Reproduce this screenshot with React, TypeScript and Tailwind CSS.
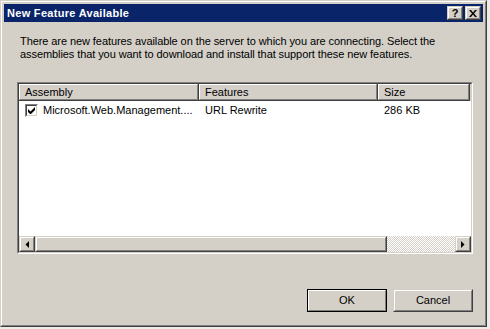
import React from "react";

const rOuter =
  "border border-t-[#d4d0c8] border-l-[#d4d0c8] border-r-[#404040] border-b-[#404040]";
const rInner =
  "border border-t-white border-l-white border-r-[#808080] border-b-[#808080]";

function Raised({ className = "", children }: { className?: string; children?: React.ReactNode }) {
  return (
    <div className={`${rOuter} ${className}`}>
      <div className={`${rInner} w-full h-full bg-[#d4d0c8] flex items-center justify-center`}>{children}</div>
    </div>
  );
}

function LeftArrow() {
  return (
    <svg width="4" height="7" viewBox="0 0 4 7">
      <polygon points="4,0 4,7 0.5,3.5" fill="#000" />
    </svg>
  );
}
function RightArrow() {
  return (
    <svg width="4" height="7" viewBox="0 0 4 7">
      <polygon points="0,0 0,7 3.5,3.5" fill="#000" />
    </svg>
  );
}

function HeaderCell({ w, label }: { w: string; label?: string }) {
  return (
    <div className={`${w} h-full border-r border-b border-r-[#404040] border-b-[#404040]`}>
      <div className="h-full border border-t-white border-l-white border-r-[#808080] border-b-[#808080] bg-[#d4d0c8] pl-[5px] flex items-center leading-none">
        {label}
      </div>
    </div>
  );
}

export default function App() {
  return (
    <div className="w-[490px] h-[329px] bg-[#ecebe8] font-['Liberation_Sans',Arial,sans-serif] text-[11px] text-black">
      <div className={`w-[487px] h-[327px] ${rOuter}`}>
        <div className={`w-full h-full ${rInner} bg-[#d4d0c8] p-[2px] flex flex-col`}>
          {/* title bar */}
          <div className="h-[18px] bg-[#0a246a] flex items-center pl-[3px] pr-[2px]">
            <span className="font-bold text-white leading-none tracking-[0.3px]">New Feature Available</span>
            <div className="ml-auto flex">
              <Raised className="w-[16px] h-[14px]">
                <span className="font-bold text-[11px] leading-none">?</span>
              </Raised>
              <Raised className="w-[16px] h-[14px] ml-[2px]">
                <svg width="8" height="7" viewBox="0 0 8 7">
                  <path d="M0 0h2l2 2.5L6 0h2L5 3.5 8 7H6L4 4.5 2 7H0l3-3.5z" fill="#000" />
                </svg>
              </Raised>
            </div>
          </div>

          {/* body */}
          <div className="flex flex-col pl-[13px] pr-[10px]">
            <p className="mt-[13px] pl-[3px] leading-[13px] tracking-[-0.08px]">
              There are new features available on the server to which you are connecting. Select the
              <br />
              assemblies that you want to download and install that support these new features.
            </p>

            {/* list box */}
            <div className="mt-[21px] h-[172px] w-[456px] border border-t-[#808080] border-l-[#808080] border-r-white border-b-white">
              <div className="w-full h-full border border-t-[#404040] border-l-[#404040] border-r-[#d4d0c8] border-b-[#d4d0c8] bg-white flex flex-col">
                <div className="flex h-[17px] shrink-0">
                  <HeaderCell w="w-[180px]" label="Assembly" />
                  <HeaderCell w="w-[179px]" label="Features" />
                  <HeaderCell w="w-[92px]" label="Size" />
                  <div className="flex-1 bg-[#d4d0c8]" />
                </div>
                <div className="flex h-[16px] mt-[1px] items-center">
                  <div className="w-[180px] pl-[6px] flex items-center">
                    <div className="w-[13px] h-[13px] border border-t-[#808080] border-l-[#808080] border-r-white border-b-white">
                      <div className="w-full h-full border border-t-[#404040] border-l-[#404040] border-r-[#d4d0c8] border-b-[#d4d0c8] bg-white flex items-center justify-center">
                        <svg width="7" height="7" viewBox="0 0 7 7">
                          <path d="M0 2v3l2 2h1l4-4V0L2.5 4.5z" fill="#000" />
                        </svg>
                      </div>
                    </div>
                    <span className="ml-[5px] leading-none whitespace-nowrap">Microsoft.Web.Management....</span>
                  </div>
                  <div className="w-[179px] pl-[6px] leading-none">URL Rewrite</div>
                  <div className="w-[92px] pl-[6px] leading-none">286 KB</div>
                </div>
                <div className="flex-1" />
                {/* horizontal scrollbar */}
                <div className="flex h-[16px] shrink-0">
                  <Raised className="w-[16px] h-[16px]">
                    <LeftArrow />
                  </Raised>
                  <Raised className="w-[352px] h-[16px]" />
                  <div className="flex-1 bg-[repeating-conic-gradient(#ffffff_0_25%,#d4d0c8_0_50%)] bg-[length:2px_2px]" />
                  <Raised className="w-[16px] h-[16px]">
                    <RightArrow />
                  </Raised>
                </div>
              </div>
            </div>

            {/* buttons */}
            <div className="mt-[35px] flex justify-end gap-[6px] w-[456px]">
              <div className="w-[80px] h-[23px] border border-black">
                <div className={`w-full h-full ${rInner} bg-[#d4d0c8] flex items-center justify-center`}>OK</div>
              </div>
              <Raised className="w-[80px] h-[23px]">Cancel</Raised>
            </div>
          </div>
        </div>
      </div>
    </div>
  );
}
